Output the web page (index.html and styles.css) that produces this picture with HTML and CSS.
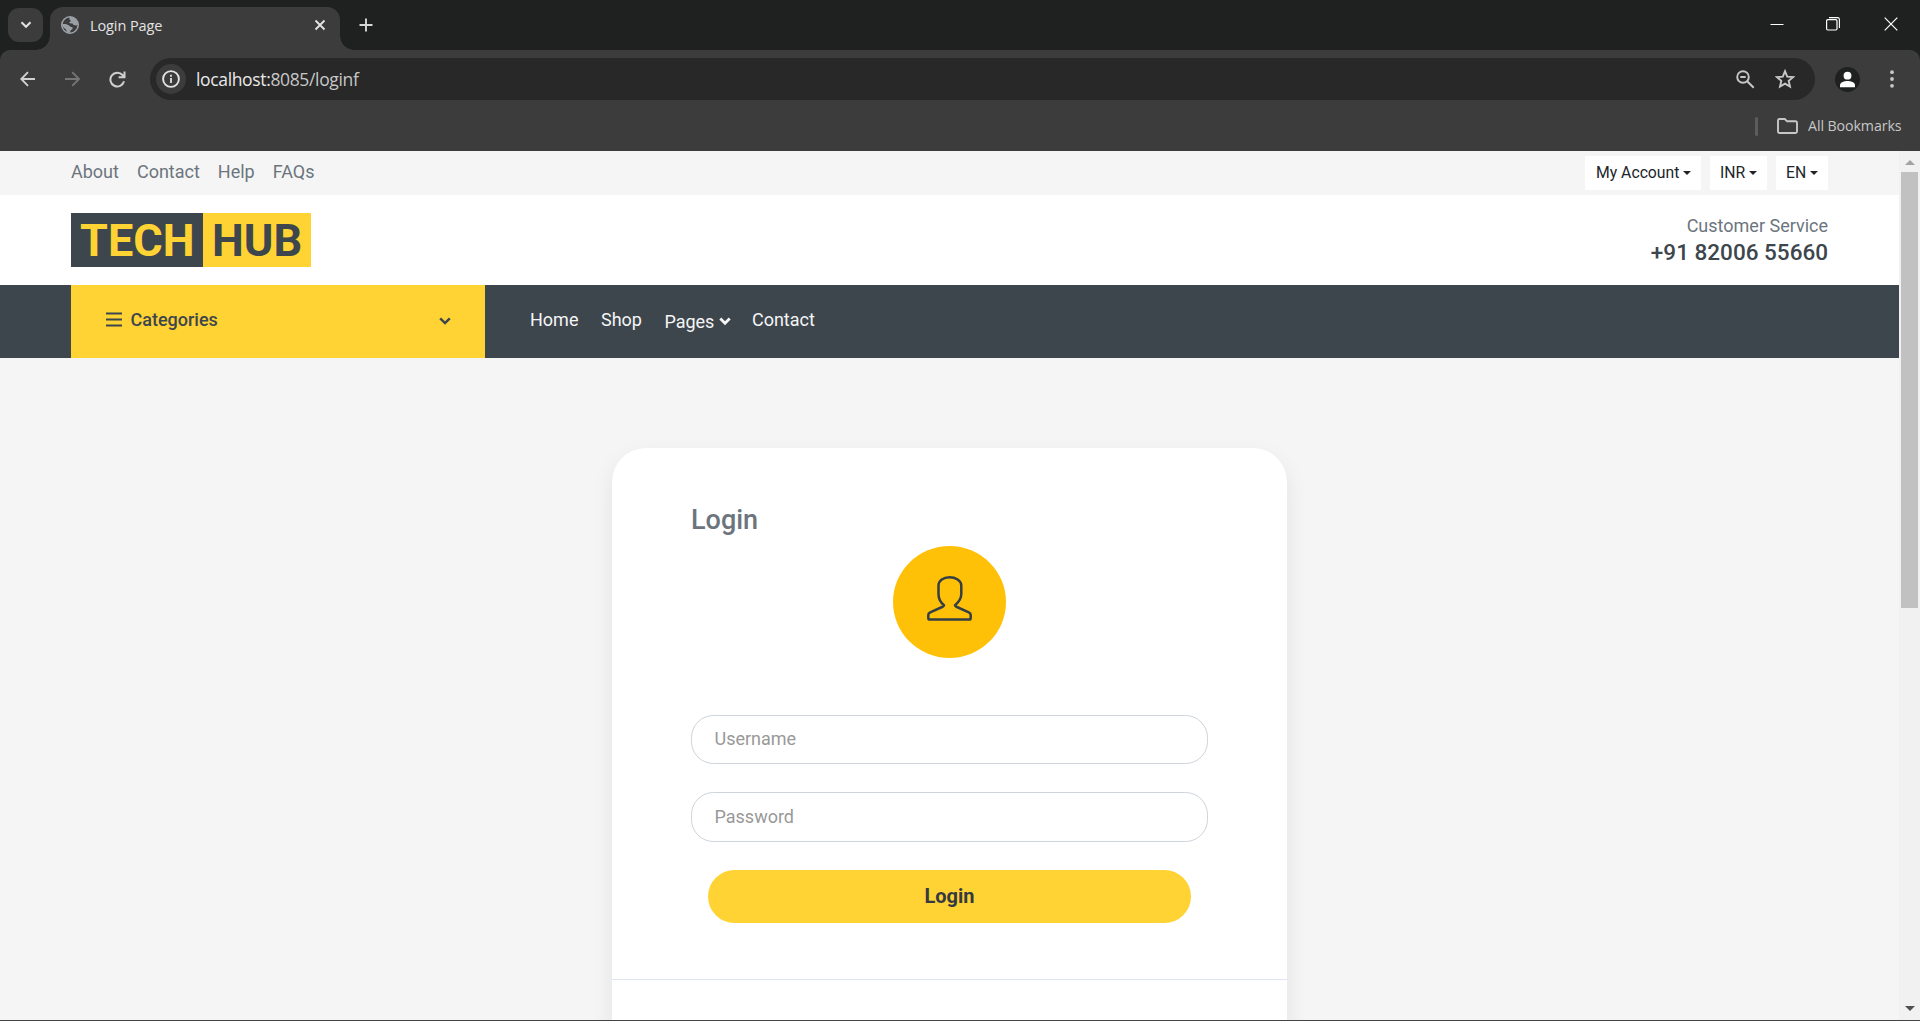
FILE: index.html
```html
<!DOCTYPE html>
<html lang="en">
<head>
<meta charset="utf-8">
<title>Login Page</title>
<link rel="stylesheet" href="styles.css">
</head>
<body>
<div class="browser">
  <div class="tabstrip">
    <div class="tab-search"><svg width="12" height="8" viewBox="0 0 12 8"><path d="M1.500 1.300 6 5.800l4.500-4.500" fill="none" stroke="#e3e3e3" stroke-width="2"/></svg></div>
    <div class="tab">
      <svg class="favicon" width="18" height="18" viewBox="0 0 18 18"><circle cx="9" cy="9" r="8.200" fill="none" stroke="#9aa0a6" stroke-width="1.600"/><path d="M8.500 1h3l3.500 2.500 2 5-1.500 1-3-.5-.8-1.500H9.500L8 6.500 10 5 8.500 3.500ZM1 8h4l3 1.500 2 1.500h1.500v2l-2 1.500L9 17 6 16.500l-1-3-3-2.500Z" fill="#9aa0a6"/></svg>
      <span class="tab-title">Login Page</span>
      <svg width="12" height="12" viewBox="0 0 12 12"><path d="m1.500 1.500 9 9m0-9-9 9" stroke="#e3e3e3" stroke-width="1.900"/></svg>
    </div>
    <svg class="new-tab" width="14" height="14" viewBox="0 0 14 14"><path d="M7 .5v13M.5 7h13" stroke="#d6d6d6" stroke-width="1.900"/></svg>
    <div class="window-buttons">
      <svg width="14" height="14" viewBox="0 0 14 14"><path d="M.5 7.500h13" stroke="#fff"/></svg>
      <svg width="14" height="14" viewBox="0 0 14 14"><path d="M3 .6h8.500a1.900 1.900 0 0 1 1.900 1.900V11" fill="none" stroke="#fff" stroke-width="1.100"/><rect x=".6" y="2.600" width="10.400" height="10.400" rx="1.200" fill="none" stroke="#fff" stroke-width="1.200"/></svg>
      <svg width="14" height="14" viewBox="0 0 14 14"><path d="m.7.7 12.600 12.600m0-12.600L.7 13.300" stroke="#fff" stroke-width="1.200"/></svg>
    </div>
  </div>
  <div class="toolbar">
    <svg width="16" height="16" viewBox="0 0 16 16"><path d="M15 8H1.700M8 1.200 1.300 8 8 14.800" fill="none" stroke="#d0d0d0" stroke-width="1.900"/></svg>
    <svg class="forward" width="16" height="16" viewBox="0 0 16 16"><path d="M0 8h13.800M7.200 1.200 14 8l-6.800 6.800" fill="none" stroke="#757575" stroke-width="1.900"/></svg>
    <svg class="reload" width="17" height="17" viewBox="0 0 17 17"><path d="M15 10.300A6.900 6.900 0 1 1 13.500 4L15 5.800M15.500.5v5.700H9.600" fill="none" stroke="#d0d0d0" stroke-width="2"/></svg>
    <div class="omnibox">
      <div class="site-info"><svg width="18" height="18" viewBox="0 0 18 18"><circle cx="9" cy="9" r="7.900" fill="none" stroke="#e3e3e3" stroke-width="1.900"/><path d="M9 8v5M9 4.700v2" stroke="#e3e3e3" stroke-width="1.800"/></svg></div>
      <span class="url">localhost:<span class="url-path">8085/loginf</span></span>
      <svg class="zoom" width="19" height="19" viewBox="0 0 19 19"><circle cx="7" cy="7" r="5.800" fill="none" stroke="#c7c7c7" stroke-width="1.900"/><path d="m11.200 11.200 6.500 6.500M4.300 7h5.400" stroke="#c7c7c7" stroke-width="2"/></svg>
      <svg width="20" height="20" viewBox="0 0 20 20"><path d="m10 2.200 2.200 5.400 5.900.5-4.400 3.800 1.300 5.700L10 14.600l-5 3 1.300-5.700-4.400-3.800 5.900-.5Z" fill="none" stroke="#c7c7c7" stroke-width="1.900"/></svg>
    </div>
    <svg class="profile" width="25" height="25" viewBox="0 0 25 25"><circle cx="12.500" cy="12.500" r="12.500" fill="#1f2020"/><circle cx="12.500" cy="8.700" r="3.900" fill="#fff"/><path d="M5 20.300v-2c0-3 4.500-4.300 7.500-4.300s7.500 1.300 7.500 4.300v2Z" fill="#fff"/></svg>
    <svg width="4" height="18" viewBox="0 0 4 18"><g fill="#c7c7c7"><circle cx="2" cy="2.200" r="1.900"/><circle cx="2" cy="9" r="1.900"/><circle cx="2" cy="15.800" r="1.900"/></g></svg>
  </div>
  <div class="bookmarks">
    <span class="divider"></span>
    <svg width="21" height="16" viewBox="0 0 21 16"><path d="M1 2.500A1.500 1.500 0 0 1 2.500 1h5.300l2.300 2.300h8.400A1.500 1.500 0 0 1 20 4.800v8.700a1.500 1.500 0 0 1-1.500 1.500h-16A1.500 1.500 0 0 1 1 13.500Z" fill="none" stroke="#c7c7c7" stroke-width="1.900"/></svg>
    <span class="bookmarks-label">All Bookmarks</span>
  </div>
</div>
<div class="viewport">
  <div class="page">
    <div class="topbar">
      <nav class="top-links"><a>About</a><a>Contact</a><a>Help</a><a>FAQs</a></nav>
      <div class="top-menus"><button class="w-account">My Account<i class="caret"></i></button><button class="w-inr">INR<i class="caret"></i></button><button class="w-en">EN<i class="caret"></i></button></div>
    </div>
    <header class="header">
      <div class="logo"><span class="logo-tech">TECH</span><span class="logo-hub">HUB</span></div>
      <div class="service"><p>Customer Service</p><h5>+91 82006 55660</h5></div>
    </header>
    <div class="navbar">
      <div class="categories">
        <svg width="16" height="15" viewBox="0 0 16 15"><path d="M0 1.500h16M0 7.500h16M0 13.500h16" stroke="#3d464d" stroke-width="2.200"/></svg>
        <span>Categories</span>
        <svg class="cat-arrow" width="12" height="8" viewBox="0 0 12 8"><path d="M1.200 1.400 6 6.100l4.800-4.700" fill="none" stroke="#3d464d" stroke-width="2.500"/></svg>
      </div>
      <nav class="nav-links"><a>Home</a><a>Shop</a><a class="pages">Pages<svg width="12" height="9" viewBox="0 0 12 9"><path d="M1.300 1.600 6 6.300l4.700-4.700" fill="none" stroke="#f5f5f5" stroke-width="2.800"/></svg></a><a>Contact</a></nav>
    </div>
    <main class="content">
      <section class="card">
        <div class="card-body">
          <h4>Login</h4>
          <div class="avatar"><svg width="45" height="46" viewBox="0 0 45 46"><path d="M22.500 2.200C16.500 2.200 11.500 5.500 11.500 10.500V19c0 5 2.300 8.600 5.500 11.200-.2 1-1 1.400-1.900 1.800L3.200 37.300Q1.300 38.200 1.300 40v3q0 1.600 1.600 1.600h39.200q1.600 0 1.600-1.600v-3q0-1.800-1.900-2.700L29.900 32c-.9-.4-1.700-.8-1.900-1.800 3.200-2.600 6.300-6.200 6.300-11.200v-8.500c0-5-5.800-8.300-11.800-8.300Z" fill="none" stroke="#343f45" stroke-width="2.500" stroke-linejoin="round"/></svg></div>
          <input class="field" type="text" placeholder="Username">
          <input class="field" type="password" placeholder="Password">
          <button class="submit">Login</button>
        </div>
        <div class="card-footer"></div>
      </section>
    </main>
  </div>
  <div class="scrollbar"><i class="arrow-up"></i><i class="thumb"></i><i class="arrow-down"></i></div>
</div>
<div class="window-edge"></div>
</body>
</html>
```
FILE: styles.css
```css
* { box-sizing: border-box; }
html, body { margin: 0; height: 100%; overflow: hidden; }
body { display: flex; flex-direction: column; height: 1021px; font: 18px/27px Roboto, sans-serif; color: #6c757d; }
svg { display: block; flex: none; }
h4, h5, p { margin: 0; }

.browser { height: 151px; flex: none; background: #1f2120; font-family: "Open Sans", sans-serif; }
.tabstrip { display: flex; height: 50px; padding: 7px 22px 0 8px; background: #1f2120; }
.tab-search { position: relative; z-index: 1; display: flex; align-items: center; justify-content: center; width: 35px; height: 34px; margin-top: 1px; border-radius: 11px; background: #3c3c3c; }
.tab { position: relative; display: flex; align-items: center; width: 290px; height: 43px; margin-left: 7px; padding: 0 14px 7px 11px; border-radius: 13px 13px 0 0; background: #3c3c3c; }
.tab::before, .tab::after { content: ""; position: absolute; bottom: 0; width: 14px; height: 14px; }
.tab::before { left: -14px; background: radial-gradient(circle at 0 0, #1f2120 13.500px, #3c3c3c 14px); }
.tab::after { right: -14px; background: radial-gradient(circle at 100% 0, #1f2120 13.500px, #3c3c3c 14px); }
.tab-title { flex: 1; margin-left: 11px; font-size: 14.500px; letter-spacing: -0.100px; color: #e3e3e3; }
.new-tab { margin: 11px 0 0 18.500px; }
.window-buttons { display: flex; gap: 42px; margin: 10px 0 0 auto; }
.window-buttons svg:last-child { margin-left: 2px; }
.toolbar { display: flex; align-items: center; height: 58px; padding: 0 26px 0 20px; border-radius: 10px 10px 0 0; background: #3c3c3c; }
.forward { margin-left: 29px; }
.reload { margin-left: 28px; }
.omnibox { display: flex; align-items: center; width: 1665px; height: 42px; margin-left: 24px; padding: 0 20px 0 6px; border-radius: 21px; background: #282828; }
.site-info { display: flex; align-items: center; justify-content: center; width: 30px; height: 30px; border-radius: 50%; background: #3c3c3c; }
.url { flex: 1; margin-left: 10px; font-size: 17.500px; letter-spacing: -0.350px; line-height: 26px; padding-bottom: 1px; color: #e8e8e8; }
.url-path { color: #c7c7c7; }
.zoom { margin-right: 20px; }
.profile { margin: 0 30px 0 20px; }
.bookmarks { display: flex; align-items: center; justify-content: flex-end; height: 43px; padding: 0 18px 7px 0; background: #3c3c3c; }
.divider { width: 3px; height: 19px; margin-right: 19px; border-radius: 2px; background: #5c5c5c; }
.bookmarks-label { width: 94px; margin-left: 10px; padding-bottom: 2px; font-size: 14.200px; letter-spacing: -0.080px; white-space: nowrap; color: #c7c7c7; }

.viewport { display: flex; height: 869px; flex: none; }
.page { display: flex; flex-direction: column; width: 1899px; background: #f5f5f5; }
.topbar { display: flex; align-items: center; justify-content: space-between; height: 44px; flex: none; padding: 0 71px; }
.top-links { display: flex; gap: 18px; padding-bottom: 4px; }
.top-menus { display: flex; gap: 9px; }
.top-menus button { display: flex; align-items: center; height: 34px; padding: 0 0 1px 10px; border: 0; background: #fff; font: 15.750px/23px Roboto, sans-serif; color: #212529; }
.top-menus .w-account { width: 116px; padding-left: 11px; }
.w-inr { width: 57px; }
.w-en { width: 52px; }
.caret { margin-left: 4px; border: 4px solid transparent; border-top-color: #212529; border-bottom: 0; }
.header { display: flex; align-items: center; justify-content: space-between; height: 90px; flex: none; padding: 0 71px; background: #fff; }
.logo { display: flex; font-size: 45px; font-weight: 700; line-height: 52px; }
.logo span { padding: 2px 9px 0; }
.logo-tech { width: 132px; background: #3d464d; color: #ffd333; }
.logo-hub { width: 108px; background: #ffd333; color: #3d464d; }
.service { padding-bottom: 2px; text-align: right; }
.service h5 { font-size: 22.500px; font-weight: 500; line-height: 27px; color: #3d464d; }
.navbar { display: flex; height: 73px; flex: none; padding-left: 71px; background: #3d464d; }
.categories { display: flex; align-items: center; width: 414px; padding: 0 34px 4px 35px; background: #ffd333; font-weight: 500; color: #3d464d; }
.categories span { flex: 1; margin-left: 8.500px; }
.cat-arrow { margin-top: 3px; }
.nav-links { display: flex; padding: 21px 0 0 45px; gap: 22.500px; color: #f5f5f5; }
.pages { display: flex; align-items: center; height: 29px; margin-right: -1.500px; padding-top: 2px; }
.pages svg { margin-left: 4.500px; }
.content { display: flex; justify-content: center; flex: 1; padding-top: 90px; overflow: hidden; }
.card { width: 675px; height: 700px; flex: none; border-radius: 34px; background: #fff; box-shadow: 0 9px 22px rgba(0, 0, 0, .08); }
.card-body { display: flex; flex-direction: column; align-items: center; height: 531px; padding-top: 56px; }
.card h4 { align-self: flex-start; margin-left: 79px; font-size: 27px; font-weight: 500; line-height: 32px; }
.avatar { display: flex; justify-content: center; width: 113px; height: 112px; margin: 10px 0 57px; padding-top: 29px; border-radius: 50%; background: #ffc107; }
.field { width: 517px; height: 49px; flex: none; margin-bottom: 28px; padding: 0 22.500px 2px; border: 1px solid #ced4da; border-radius: 22.500px; background: #fff; font: 18px/27px Roboto, sans-serif; }
.field + .field { height: 50px; }
.field::placeholder { color: #999; opacity: 1; }
.submit { width: 483px; height: 53px; padding-bottom: 3px; border: 0; border-radius: 27px; background: #ffd333; font: 700 20px/30px Roboto, sans-serif; color: #343a40; }
.card-footer { height: 100px; border-top: 1px solid #dfe5f5; }
.scrollbar { display: flex; flex-direction: column; align-items: center; width: 21px; padding: 9px 0; background: #f1f1f1; }
.arrow-up { border: 5px solid transparent; border-bottom-color: #a3a3a3; border-top: 0; }
.thumb { width: 17px; height: 436px; margin-top: 7px; background: #c1c1c1; }
.arrow-down { margin-top: auto; border: 5px solid transparent; border-top-color: #505050; border-bottom: 0; }
.window-edge { height: 1px; background: #444; }
```
